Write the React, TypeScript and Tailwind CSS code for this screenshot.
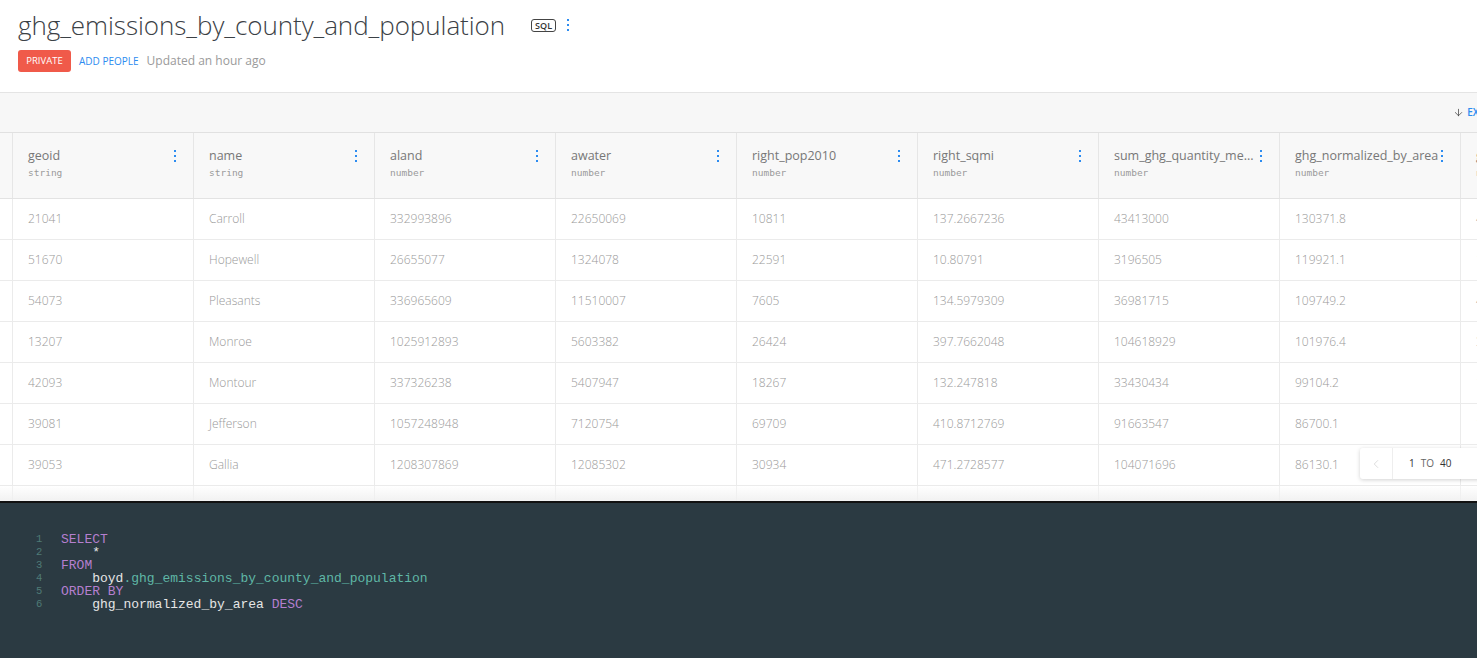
import { ChevronLeft, ArrowDown } from 'lucide-react'

const COLUMNS: { name: string; type: string }[] = [
  { name: 'geoid', type: 'string' },
  { name: 'name', type: 'string' },
  { name: 'aland', type: 'number' },
  { name: 'awater', type: 'number' },
  { name: 'right_pop2010', type: 'number' },
  { name: 'right_sqmi', type: 'number' },
  { name: 'sum_ghg_quantity_me...', type: 'number' },
  { name: 'ghg_normalized_by_area', type: 'number' },
  { name: 'ghg_per_capita', type: 'number' },
]

const ROWS: string[][] = [
  ['21041', 'Carroll', '332993896', '22650069', '10811', '137.2667236', '43413000', '130371.8', '4015.7'],
  ['51670', 'Hopewell', '26655077', '1324078', '22591', '10.80791', '3196505', '119921.1', '141.5'],
  ['54073', 'Pleasants', '336965609', '11510007', '7605', '134.5979309', '36981715', '109749.2', '4862.8'],
  ['13207', 'Monroe', '1025912893', '5603382', '26424', '397.7662048', '104618929', '101976.4', '3959.2'],
  ['42093', 'Montour', '337326238', '5407947', '18267', '132.247818', '33430434', '99104.2', '1830.1'],
  ['39081', 'Jefferson', '1057248948', '7120754', '69709', '410.8712769', '91663547', '86700.1', '1314.9'],
  ['39053', 'Gallia', '1208307869', '12085302', '30934', '471.2728577', '104071696', '86130.1', '3364.3'],
  ['55079', 'Milwaukee', '625440547', '2455493354', '947735', '241.4787285', '53232077', '85247.5', '56.2'],
]

const ui = { fontFamily: '"Open Sans", "Liberation Sans", sans-serif' }
const mono = { fontFamily: '"DejaVu Sans Mono", "Liberation Mono", monospace' }
const code = { fontFamily: '"Liberation Mono", "Courier New", monospace' }

function Kebab({ className }: { className?: string }) {
  return (
    <span className={`flex flex-col gap-[3px] ${className ?? ''}`}>
      <span className="block w-[2px] h-[2px] bg-[#2d8cf0]" />
      <span className="block w-[2px] h-[2px] bg-[#2d8cf0]" />
      <span className="block w-[2px] h-[2px] bg-[#2d8cf0]" />
    </span>
  )
}

function Header() {
  return (
    <div className="h-[93px] border-b border-[#e4e4e4] bg-white pl-[18px] pt-[7px]">
      <div className="flex items-center">
        <h1 className="text-[26px] font-light text-[#3b4146] leading-[36px] tracking-[-0.05px]">
          ghg_emissions_by_county_and_population
        </h1>
        <span className="ml-[26px] border border-[#444] rounded-[3px] px-[3px] text-[9px] leading-[11px] text-[#333] font-semibold">
          SQL
        </span>
        <Kebab className="ml-[11px]" />
      </div>
      <div className="flex items-center mt-[7px]">
        <span className="bg-[#f05a4a] text-white text-[9.5px] rounded-[3px] w-[53px] h-[22px] flex items-center justify-center">
          PRIVATE
        </span>
        <span className="ml-[8px] text-[#2d8cf0] text-[10px]">ADD PEOPLE</span>
        <span className="ml-[8px] text-[#9a9a9a] text-[12px]">Updated an hour ago</span>
      </div>
    </div>
  )
}

function Toolbar() {
  return (
    <div className="h-[40px] bg-[#f7f7f7] border-b border-[#e1e1e1] flex items-center justify-end pr-0">
      <div className="flex items-center text-[#2d8cf0] text-[10px] font-semibold translate-x-[2px]">
        <ArrowDown size={11} strokeWidth={1.5} className="text-[#333]" />
        <span className="ml-[3px]">EX</span>
      </div>
    </div>
  )
}

function Table() {
  return (
    <div className="relative h-[368px] overflow-hidden">
      {/* head */}
      <div className="flex h-[66px] bg-[#f8f8f8] border-b border-[#e3e3e3]">
        <div className="w-[13px] shrink-0 border-r border-[#e6e6e6]" />
        {COLUMNS.map((c) => (
          <div key={c.name} className="w-[181px] shrink-0 border-r border-[#e6e6e6] pl-[15px] pr-[17px] pt-[15px] flex justify-between">
            <div>
              <div className="text-[12.5px] text-[#777] leading-[16px] whitespace-nowrap">{c.name}</div>
              <div className="text-[9.5px] text-[#9a9a9a] leading-[14px] mt-[2px]" style={mono}>{c.type}</div>
            </div>
            <Kebab className="mt-[2px]" />
          </div>
        ))}
      </div>
      {/* body */}
      {ROWS.map((r) => (
        <div key={r[0]} className="flex h-[41px] border-b border-[#ebebeb] bg-white">
          <div className="w-[13px] shrink-0 border-r border-[#ebebeb]" />
          {r.map((v, i) => (
            <div key={i} className="w-[181px] shrink-0 border-r border-[#ebebeb] pl-[15px] flex items-center text-[12px] text-[#999] font-light whitespace-nowrap">
              {v}
            </div>
          ))}
        </div>
      ))}
      {/* fade over the partially shown row */}
      <div className="absolute left-0 right-0 bottom-0 h-[15px] bg-gradient-to-b from-white/30 to-[#f0f0f0]/90" />
      {/* pagination */}
      <div className="absolute left-[1360px] top-[315px] w-[130px] h-[31px] bg-white rounded-[3px] shadow-[0_1px_4px_rgba(0,0,0,0.18)] flex items-center">
        <div className="w-[33px] h-full border-r border-[#eee] flex items-center justify-center">
          <ChevronLeft size={14} strokeWidth={1} className="text-[#c4c4c4]" />
        </div>
        <span className="ml-[16px] text-[10px] text-[#333]">1</span>
        <span className="ml-[6px] text-[10px] text-[#666]">TO</span>
        <span className="ml-[6px] text-[10px] text-[#333]">40</span>
      </div>
    </div>
  )
}

const KW = 'text-[#b57fcf]'
const ID = 'text-[#5fb7a6]'
const TX = 'text-[#e6e6e6]'

function Editor() {
  const lines: React.ReactNode[] = [
    <span className={KW}>SELECT</span>,
    <span className={TX}>{'    *'}</span>,
    <span className={KW}>FROM</span>,
    <span>
      <span className={TX}>{'    boyd'}</span>
      <span className={ID}>.ghg_emissions_by_county_and_population</span>
    </span>,
    <span className={KW}>ORDER BY</span>,
    <span>
      <span className={TX}>{'    ghg_normalized_by_area '}</span>
      <span className={KW}>DESC</span>
    </span>,
  ]
  return (
    <div className="flex-1 bg-[#2b3a42] border-t-2 border-[#111] pt-[30px] pl-[36px]" style={code}>
      {lines.map((l, i) => (
        <div key={i} className="flex text-[13px] leading-[13px] whitespace-pre">
          <span className="w-[25px] text-[#4f7a76] text-[10.5px]">{i + 1}</span>
          {l}
        </div>
      ))}
    </div>
  )
}

export default function App() {
  return (
    <div className="w-[1477px] h-[658px] overflow-hidden flex flex-col bg-white" style={ui}>
      <Header />
      <Toolbar />
      <Table />
      <Editor />
    </div>
  )
}
